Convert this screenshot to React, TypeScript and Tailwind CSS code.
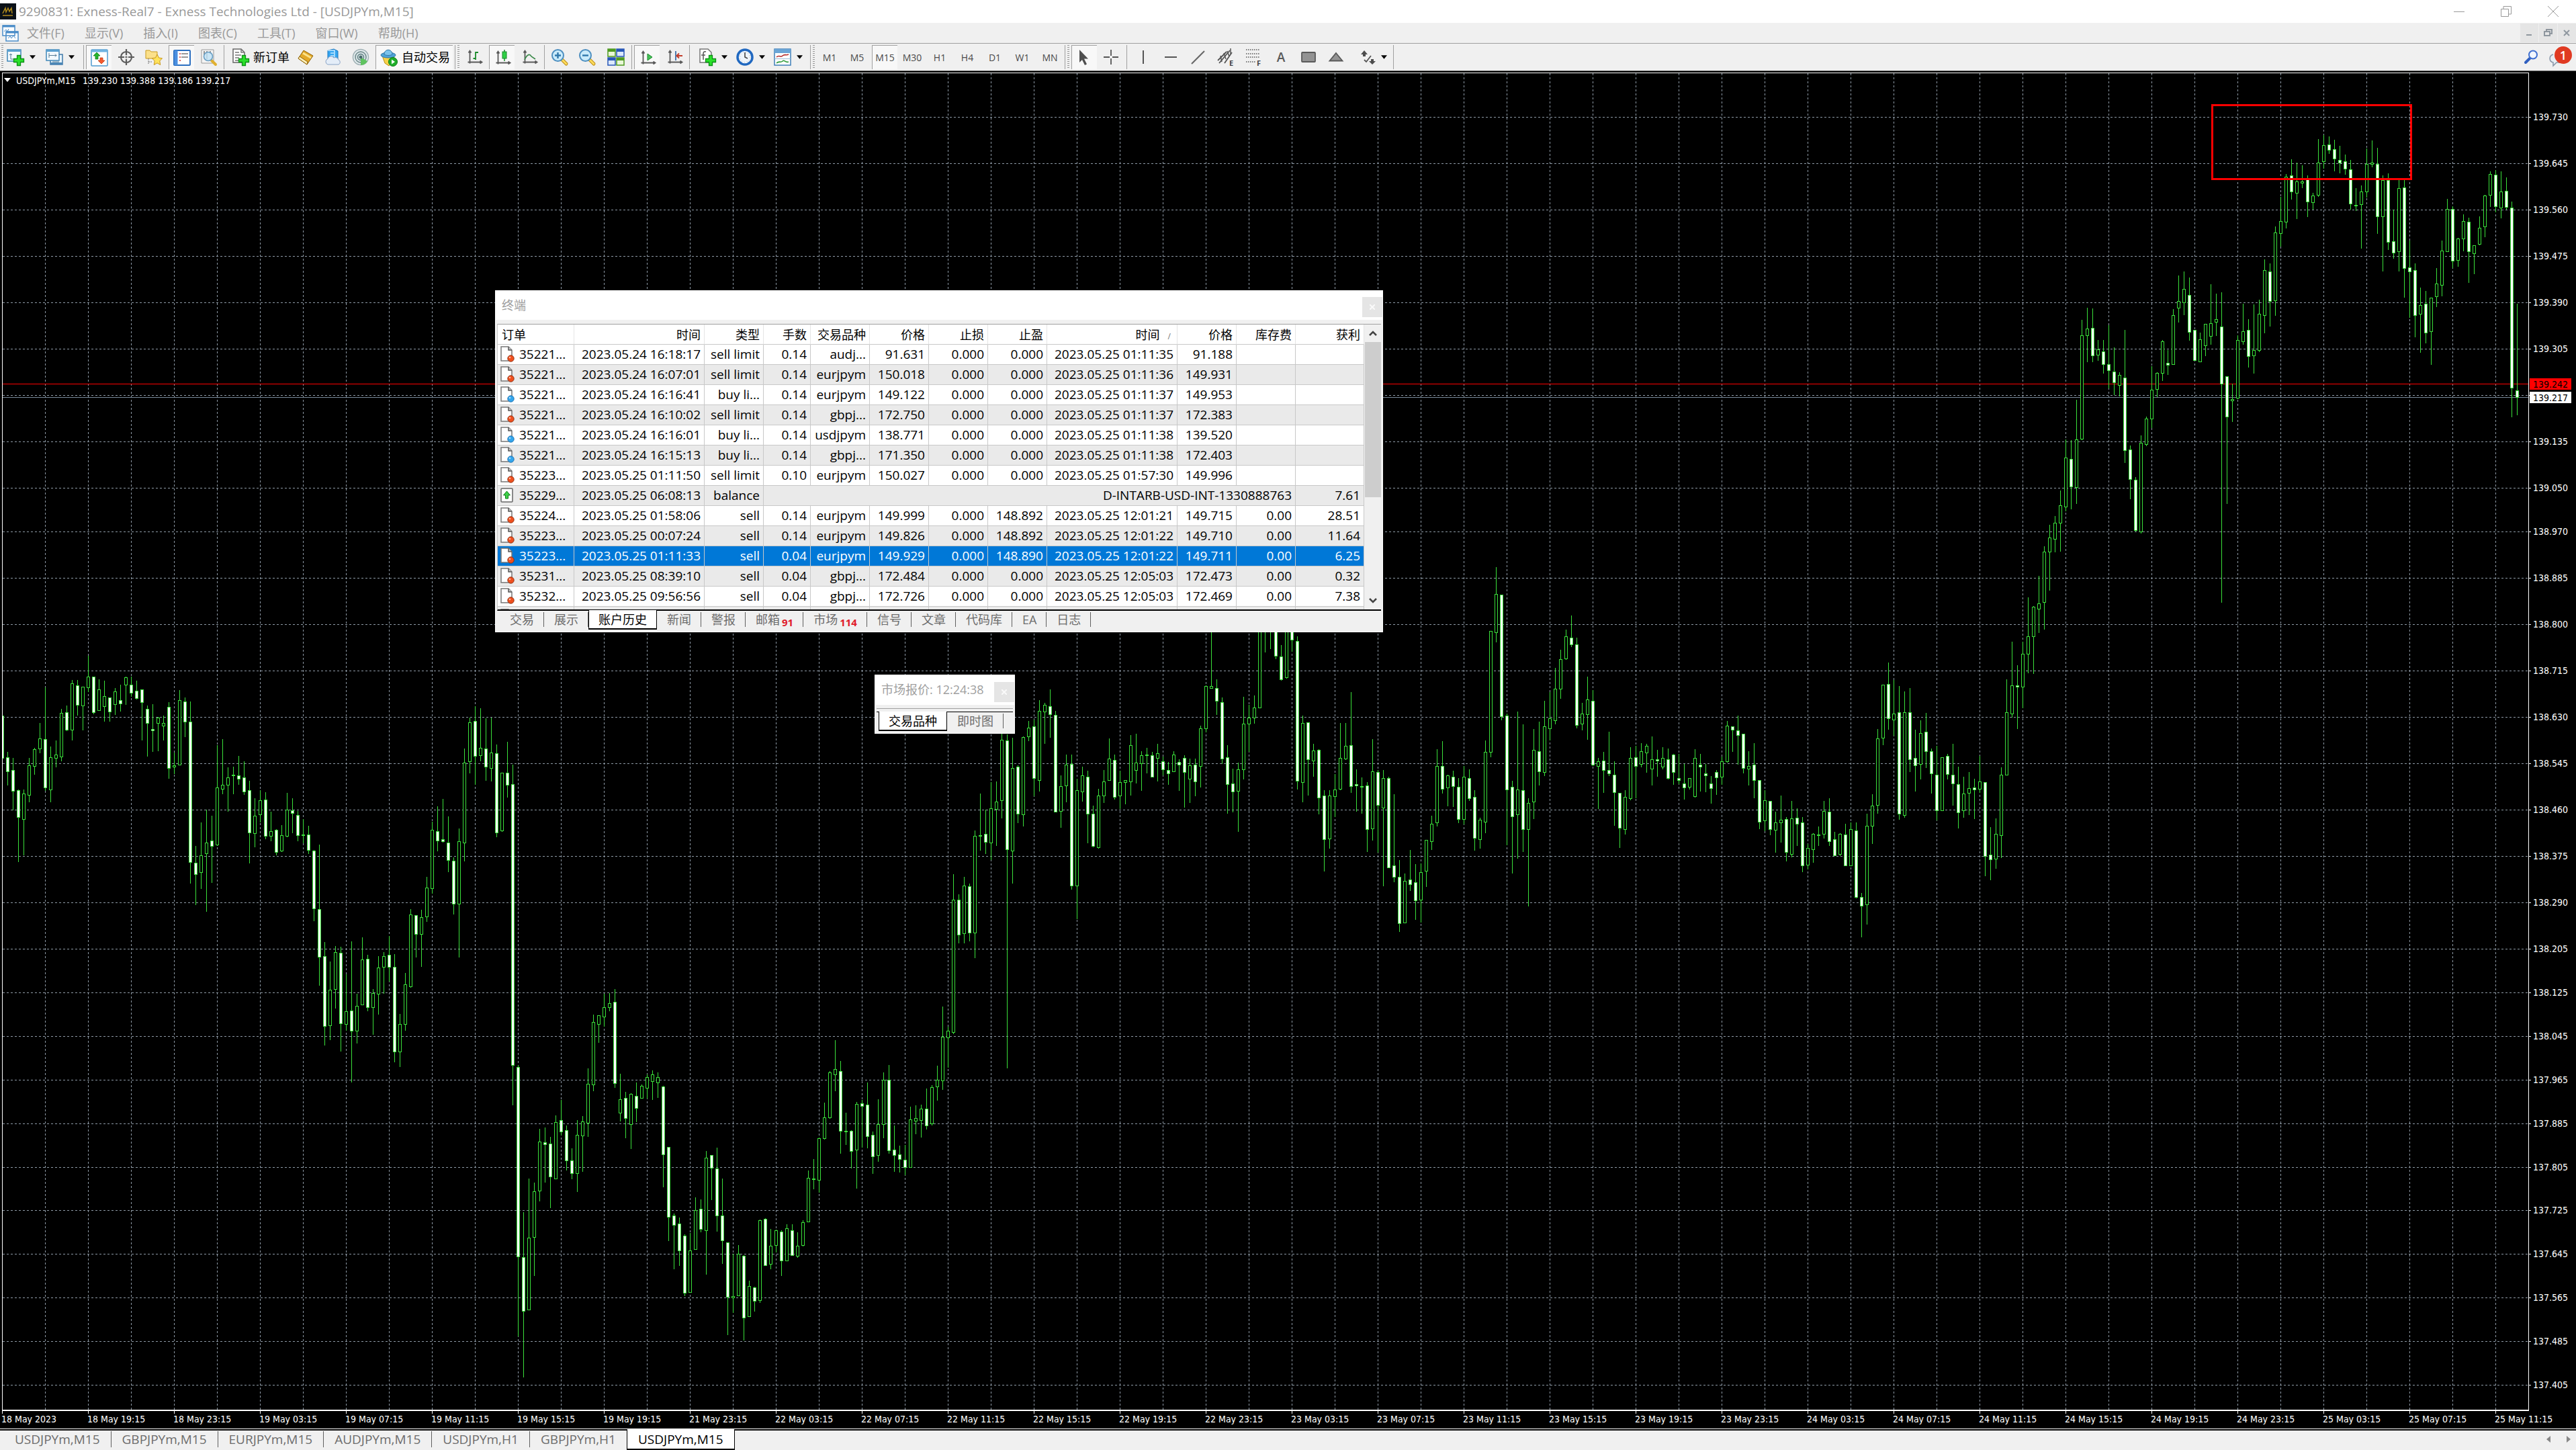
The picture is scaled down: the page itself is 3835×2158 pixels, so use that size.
import type { ReactNode } from "react";

type Bar = { x: number; high: number; top: number; bottom: number; low: number; down: boolean };

// Each session keeps its own origin and zoom. A bar is "high top bottom low", d marks a falling one.
const sessions = [
  {
    origin: 980,
    zoom: 1.4255,
    bars: `103 121 211 237d,198 209 240 268d,211 237 281 321d,278 279 337 430d,278 286 340 416,211 226 290 303,190 192 228 245,137 169 191 199,62 171 274 279d,187 209 278 304,
174 204 211 229,107 116 208 217,100 114 151 152d,46 53 151 172,46 57 98 120d,60 60 100 151,-5 38 62 70,38 39 114 117d,44 66 110 110,47 80 101 133,
82 82 112 133d,63 70 97 118,56 88 95 111d,39 40 55 97,38 55 73 80d,47 68 84 85d,65 66 92 172d,100 107 137 207d,97 150 153 197d,124 126 137 196,
121 137 142 173,92 103 232 254d,199 226 230 244,67 88 225 225,83 91 134 165d,91 134 432 476d,398 434 458 522d,348 418 453 488,321 390 414 536,334 387 398 475d,
184 274 395 396,171 268 277 287,231 253 268 324,229 246 248 287,207 248 255 267d,218 252 282 288d,259 279 369 433d,296 333 370 399,279 301 331 346,284 300 377 382d,
325 366 377 387,362 364 410 416d,354 375 408 409,285 321 377 378,296 322 328 369d,324 332 375 387d,341 373 375 391d,355 373 406 413d,406 407 530 556d,395 531 633 693d,
602 632 780 820d,643 703 778 808,610 623 701 741,611 625 774 833d,670 749 776 789,600 747 790 898d,711 737 790 815,591 638 734 734,629 637 740 747d,702 710 740 797,
631 656 711 754,623 632 654 710,589 629 654 684d,627 655 834 855d,754 776 834 865,667 692 775 788,532 543 695 697,544 544 584 633d,533 549 585 653,463 486 548 557,
346 364 487 497,314 366 386 408d,298 384 388 389d,335 390 427 452d,422 429 521 542d,361 388 520 633,191 221 390 429,125 136 218 242,101 133 207 267d,105 189 205 216,
127 191 230 258d,125 199 232 260,182 201 369 378d,242 243 365 366,177 242 268 294d,225 266 862 947d,862 866 1268 1437d,1175 1270 1384 1524d,1103 1229 1381 1381,1112 1131 1227 1309,
998 1025 1129 1150,995 1026 1030 1110d,1015 1029 1099 1165d,969 983 1103 1103,937 980 1004 1010d,991 1000 1065 1085d`,
  },
  {
    origin: 1080,
    zoom: 1.6,
    bars: `1006 1035 1065 1079d,939 975 1066 1108,929 943 976 1061,816 853 945 978,688 705 855 868,689 690 710 754,638 671 692 715,637 660 670 679,627 657 851 861d,828 890 922 940,
872 887 934 980d,875 877 949 1006,850 881 910 942d,855 857 887 887,831 836 863 887,820 831 846 889,825 836 850 885,858 859 1021 1098d,1003 1003 1169 1225d,1161 1167 1188 1293d,
1171 1186 1250 1285d,1211 1214 1350 1357d,1208 1250 1348 1348,1123 1153 1247 1247,1128 1151 1198 1205d,1013 1028 1201 1306,1022 1023 1053 1128d,1005 1054 1166 1203d,1079 1166 1225 1280d,1230 1230 1360 1450d,
1258 1359 1361 1396,1237 1258 1356 1356,1261 1262 1410 1462d,1321 1335 1406 1406,1336 1337 1370 1394d,1176 1177 1368 1372,1172 1175 1284 1285d,1199 1238 1281 1293,1200 1201 1236 1252,1202 1204 1274 1308d,
1187 1197 1273 1273,1187 1201 1260 1261d,1207 1238 1263 1266,1177 1182 1237 1238,1059 1077 1180 1181,1032 1078 1079 1103,980 982 1081 1111,897 932 983 984,822 825 933 934,749 818 830 868,
798 822 964 1018d,922 965 966 997,963 964 1012 1053d,896 900 1009 1101,891 899 905 1003d,850 903 977 1004d,966 975 1026 1066d,889 948 1023 1036,826 843 949 981,808 843 1011 1017d,
952 1009 1023 1061d,1000 1020 1032 1062d,998 1033 1051 1068d,907 938 1051 1051,904 935 940 971,903 912 939 979,864 912 952 960d,856 861 947 950,809 843 859 891,669 741 845 865,
716 727 743 812,354 415 730 733,401 415 497 516d,360 380 495 517,376 382 492 512d,249 262 492 552,162 260 262 296,200 257 276 304d,135 196 278 318,133 180 199 284,
10 34 177 219,20 35 295 814d,29 101 298 374,94 98 209 230d,25 27 211 238,-12 5 25 35,-14 2 125 167d,-61 -35 129 155,-54 -50 -33 42,-87 -47 -27 27d,
-35 -25 205 205d,119 144 203 242,69 92 142 181,69 91 380 388d,126 153 381 459,97 119 156 179,107 121 210 278d,190 209 287 288d,151 166 290 291,106 132 167 182,
31 79 130 130,69 81 169 174d,107 134 167 197,129 130 135 186,22 46 132 165,19 88 105 136,61 70 90 153,52 68 71 112,62 70 122 122d,43 66 76 131,
74 84 104 116d,87 105 113 139d,61 69 108 108,80 86 92 153d,71 76 110 194d,79 95 127 182,79 93 132 166d,0 7 96 145,-96 -94 6 15`,
  },
  {
    origin: 820,
    zoom: 2.6133,
    bars: `200 526 532 532,499 532 584 635d,571 589 807 827d,755 803 906 1018d,847 903 935 1015d,824 850 932 1090,567 672 849 886,599 647 671 780,563 610 647 668,200 250 608 608,
200 230 280 392,200 230 290 378,200 250 407 417d,366 411 498 502d,250 300 492 493,250 280 346 390d,332 351 895 925d,639 670 898 975,666 667 809 949d,750 775 815 876,
772 773 958 1022d,930 952 1120 1244d,930 952 1118 1155,868 929 953 1032,669 806 924 929,669 759 807 811,548 754 914 938d,849 908 913 1012d,880 915 916 1018,899 913 1081 1168d,
733 858 1079 1124,852 860 989 1172d,852 884 997 1301,877 884 1230 1231d,946 1224 1267 1287d,1202 1268 1449 1478d,1254 1284 1444 1445,1163 1279 1295 1320d,1219 1289 1358 1432d,1215 1248 1355 1443,
1124 1125 1245 1304,1030 1062 1128 1160,771 837 1057 1070,740 835 924 942d,869 874 919 990,855 879 914 994d,883 916 1042 1057d,837 879 1044 1062,849 884 963 969d,930 957 1115 1163d,
1037 1046 1122 1155,737 782 1052 1094,311 312 782 799,63 166 315 353,170 171 644 656d,633 641 929 1142d,895 918 1033 1252d,625 929 1025 1195,674 931 1083 1168d,962 981 1081 1381,
693 774 976 1040,664 780 856 910d,582 683 861 873,549 650 689 735,455 537 658 672,384 422 535 572,306 333 419 420,250 338 362 371d,337 364 676 686d,591 633 671 695,
489 578 636 733,540 584 832 833d,806 819 835 1001,782 816 851 938d,703 853 864 873d,819 871 937 1067d,941 942 1076 1152d,930 957 1081 1101,762 806 963 966,758 803 835 960d,
748 780 829 839,750 759 783 860,720 811 848 909,774 809 815 876d,762 806 839 846,769 811 884 885d,788 793 861 907d,788 884 892 905d,829 903 919 964d,883 884 916 924,
770 806 955 956,789 832 840 934d,829 866 874 935d,875 903 922 980d,853 861 880 947d,800 819 877 907,661 680 817 820,681 683 696 779d,640 699 715 829d,711 712 844 862d,
780 837 846 909,747 832 892 960d,890 890 1052 1078d,930 970 1047 1087,972 973 1081 1102d,1015 1056 1084 1171,951 1046 1055 1132,1035 1044 1172 1206d,972 1041 1178 1188,1002 1038 1060 1145d,
1036 1056 1222 1247d,1139 1156 1220 1235,1098 1101 1159 1210,1071 1104 1105 1145,972 1012 1099 1115,962 1015 1128 1145d,1092 1122 1183 1184d,1098 1099 1178 1184,1061 1104 1222 1222d,1056 1083 1222 1222,
1056 1088 1346 1348d,1330 1347 1380 1500d,1021 1070 1374 1450,946 991 1068 1137,693 730 987 1019,520 521 726 752,435 518 650 692d,502 633 655 717,526 628 1021 1043d,546 626 1026 1036,
534 628 809 857d,695 806 833 934d,659 707 828 886,629 704 778 841d,768 780 864 942d,759 869 1010 1046d,802 803 1008 1008,790 798 867 886d,750 871 904 989d,839 908 1017 1077d,
878 944 1010 1036,860 923 942 1024,886 920 927 1040d,797 897 925 938,899 900 1186 1262d,1073 1180 1199 1278d,1040 1099 1196 1233,841 871 1105 1192,499 626 869 870,352 523 632 645,
444 523 527 690d,352 401 527 608,180 333 400 473,214 218 331 476,97 203 224 316`,
  },
  {
    origin: 120,
    zoom: 1.5373,
    bars: `1065 1078 1193 1254,1016 1046 1078 1165,996 1012 1048 1078,938 972 1012 1076,821 863 974 984,822 866 928 979d,730 821 930 967,547 582 820 821,520 568 582 642,521 565 629 643d,
594 615 627 639,593 619 648 669d,559 649 663 703d,611 665 691 718d,667 674 696 721,571 679 846 873d,835 844 912 956d,907 913 1028 1030d,812 828 1031 1035,769 774 831 835,
653 707 773 793,667 668 705 723,594 596 668 685,616 646 651 672d,522 536 648 649,446 505 520 552,436 476 507 535,450 491 575 593d,570 571 639 640d,576 592 642 642,
556 557 605 629,466 555 584 603,487 545 552 583,484 562 694 1193d,676 677 768 967d,693 728 732 780,582 594 726 727,511 574 596 603,545 571 631 655d,512 617 628 669,
501 533 616 620,409 434 536 576,418 436 505 561d,334 348 502 537,266 322 349 378,214 220 323 336,180 217 253 271d,188 230 256 315,193 230 234 245,217 226 277 310d,
257 263 279 293,134 187 261 265,125 147 184 200,128 146 159 166d,135 157 178 206d,149 181 187 211d,169 184 202 214d,181 203 282 294d,246 284 285 297,240 254 283 383,
155 190 253 266,137 188 191 197,154 190 311 349d,217 227 310 435,212 227 369 386d,295 368 394 406d,227 246 391 435,227 244 429 495d,366 428 436 541d,418 433 536 586d,
473 513 533 621,481 510 577 599d,496 496 574 649,429 465 494 517,366 389 468 492,271 294 390 390,287 293 412 428d,360 362 411 425,306 322 361 389,314 323 391 461d,
376 376 395 441,311 336 374 375,262 263 334 357,208 213 262 287,205 215 288 300d,208 254 290 314,221 252 289 293d,277 290 703 768d,510 708 724 764d`,
  },
];

const bars: Bar[] = sessions
  .flatMap(({ origin, zoom, bars }) =>
    bars.split(",").map((text) => {
      const [high, top, bottom, low] = text
        .trim()
        .split(" ")
        .map((n) => Math.round(origin + parseInt(n, 10) / zoom));
      return { x: 0, high, top, bottom, low, down: text.endsWith("d") };
    })
  )
  .map((bar, i) => ({ ...bar, x: 3 + i * 8 }));

const prices = [
  139.73, 139.645, 139.56, 139.475, 139.39, 139.305, 139.22, 139.135, 139.05, 138.97, 138.885, 138.8,
  138.715, 138.63, 138.545, 138.46, 138.375, 138.29, 138.205, 138.125, 138.045, 137.965, 137.885,
  137.805, 137.725, 137.645, 137.565, 137.485, 137.405,
];

const times = [
  "18 May 2023", "18 May 19:15", "18 May 23:15",
  "19 May 03:15", "19 May 07:15", "19 May 11:15", "19 May 15:15", "19 May 19:15",
  "21 May 23:15",
  "22 May 03:15", "22 May 07:15", "22 May 11:15", "22 May 15:15", "22 May 19:15", "22 May 23:15",
  "23 May 03:15", "23 May 07:15", "23 May 11:15", "23 May 15:15", "23 May 19:15", "23 May 23:15",
  "24 May 03:15", "24 May 07:15", "24 May 11:15", "24 May 15:15", "24 May 19:15", "24 May 23:15",
  "25 May 03:15", "25 May 07:15", "25 May 11:15",
];

const priceY = (price: number) => Math.round(175 + (139.73 - price) * 811.7) - 1;

function Chart() {
  return (
    <svg
      className="block h-full w-full font-['DejaVu_Sans_Condensed','DejaVu_Sans',sans-serif] text-[14px]"
      viewBox="0 106 3835 2020"
      preserveAspectRatio="none"
    >
      <g shapeRendering="crispEdges" fill="none">
        <g stroke="#8e9aa6" strokeDasharray="3 3">
          {prices.map((p) => (
            <path key={p} d={`M4 ${priceY(p) + 0.5}H3764`} />
          ))}
          {Array.from({ length: 58 }, (_, i) => (
            <path key={i} d={`M${67.5 + i * 64} 109V2098`} />
          ))}
        </g>
        <path d="M3 571.5H3764" stroke="#ff0000" />
        <path d="M3 591.5H3764" stroke="#778899" />
        {bars.map((b) => (
          <g key={b.x} stroke="#3ae03a">
            <path d={`M${b.x + 0.5} ${b.high}V${b.low + 1}`} />
            <rect
              x={b.x - 1.5}
              y={b.top + 0.5}
              width={4}
              height={Math.max(b.bottom - b.top, 1)}
              fill={b.down ? "#ffffff" : "#000000"}
            />
          </g>
        ))}
        <rect x="3293.5" y="156.5" width="296" height="110" stroke="#ff0000" strokeWidth="3" />
        <path d="M0 106H3V2126H0Z" fill="#000" />
        <path d="M3.5 2099V108.5H3764.5V2099" stroke="#fff" />
        <path d="M3 2099H3765" stroke="#fff" strokeWidth="2" />
        {prices.map((p) => (
          <path key={p} d={`M3765 ${priceY(p) + 0.5}H3768`} stroke="#fff" />
        ))}
        {times.map((t, i) => (
          <path key={t} d={`M${3.5 + i * 128} 2100V2104`} stroke="#fff" />
        ))}
      </g>
      <g fill="#fff">
        {prices
          .filter((p) => p !== 139.22)
          .map((p) => (
            <text key={p} x="3771" y={priceY(p) + 5}>
              {p.toFixed(3)}
            </text>
          ))}
        {times.map((t, i) => (
          <text key={t} x={2 + i * 128} y="2117">
            {t}
          </text>
        ))}
      </g>
      <rect x="3766" y="563" width="62" height="17" fill="#ff0000" />
      <text x="3771" y="577">139.242</text>
      <rect x="3766" y="583" width="62" height="17" fill="#fff" />
      <text x="3771" y="597">139.217</text>
      <path d="M6 116H16L11 122Z" fill="#fff" />
      <g fill="#fff">
        <text x="24" y="125">USDJPYm,M15</text>
        <text x="123" y="125">139.230 139.388 139.186 139.217</text>
      </g>
    </svg>
  );
}

function Icon({ children }: { children: ReactNode }) {
  return (
    <svg viewBox="0 0 26 26" className="h-[26px] w-[26px] shrink-0 overflow-visible" fill="none">
      {children}
    </svg>
  );
}

const Plus = () => (
  <path d="M15.5 10.5h5v5h5v5h-5v5h-5v-5h-5v-5h5z" fill="#2be02b" stroke="#0a8f14" strokeWidth="1.3" />
);
const Axes = () => (
  <path d="M6.500 4v18.500M3.500 20.500H24M4.500 6.500l2-3 2 3M21.500 18.500l3 2-3 2" stroke="#5a5a5a" strokeWidth="1.8" />
);
const Lens = ({ minus }: { minus?: boolean }) => (
  <>
    <path d="m16 16 7 7" stroke="#b98a12" strokeWidth="5" strokeLinecap="round" />
    <path d="m16 16 7 7" stroke="#ffdc5c" strokeWidth="3" strokeLinecap="round" />
    <circle cx="10.5" cy="10.5" r="8.5" fill="#c9ebfb" stroke="#4d8fc0" strokeWidth="2" />
    <path d={minus ? "M6 10.500h9" : "M6 10.500h9M10.500 6v9"} stroke="#2f78ac" strokeWidth="2.4" />
  </>
);

const icons = {
  newChart: (
    <Icon>
      <rect x="1" y="2" width="20" height="17" fill="#f3faff" stroke="#3f86b8" strokeWidth="1.5" />
      <path d="M1 3.500h20" stroke="#5aa0d0" strokeWidth="3" />
      <path d="M6 8v8h7M4 10l2-2 2 2" stroke="#557a92" />
      <Plus />
    </Icon>
  ),
  profiles: (
    <Icon>
      <rect x="7" y="9" width="18" height="15" fill="#e8f4fc" stroke="#3f78a8" strokeWidth="1.5" />
      <path d="M7 22.500h18" stroke="#4a86b6" strokeWidth="3" />
      <rect x="1" y="2" width="19" height="16" fill="#f3faff" stroke="#3f86b8" strokeWidth="1.5" />
      <path d="M1 3.500h19" stroke="#5aa0d0" strokeWidth="3" />
      <path d="M5 7v7M5 10.500h11M14 8.500l2 2-2 2M10 20h10" stroke="#557a92" />
    </Icon>
  ),
  market: (
    <Icon>
      <rect x="1" y="1" width="24" height="24" rx="1" fill="#fff" stroke="#4f9bd0" strokeWidth="1.5" />
      <path d="M1 3h24" stroke="#6db3e2" strokeWidth="3" />
      <path d="m9 5 5 5h-3v5H7v-5H4z" fill="#25b52d" stroke="#0c7d16" strokeWidth=".8" />
      <path d="m16 22 5-5h-3v-4h-4v4h-3z" fill="#f6592d" stroke="#c23a10" strokeWidth=".8" />
    </Icon>
  ),
  dataWindow: (
    <Icon>
      <circle cx="13" cy="13" r="8" stroke="#5c5c5c" strokeWidth="2.2" />
      <path d="M13 1v9M13 16v9M1 13h9M16 13h9" stroke="#5c5c5c" strokeWidth="2.2" />
      <path d="M13 11v4M11 13h4" stroke="#5c5c5c" />
    </Icon>
  ),
  navigator: (
    <Icon>
      <path d="M1 3h6l2 2h9v10H1z" fill="#fbe08a" stroke="#c99a1d" />
      <path d="M5 15v9M5 20h6" stroke="#777" strokeDasharray="2 1" />
      <path d="m18 9 2.500 5 5 .8-3.700 4 .9 5.700-4.700-2.700-4.700 2.700.9-5.700-3.700-4 5-.8z" fill="#ffe35c" stroke="#c8961a" />
    </Icon>
  ),
  terminal: (
    <Icon>
      <rect x="1" y="2" width="24" height="22" rx="1" fill="#fff" stroke="#2b6fc0" strokeWidth="2" />
      <path d="M4 2v22" stroke="#4b8fe0" strokeWidth="5" />
      <path d="M9 7h2M9 12h2M9 17h2" stroke="#d02a2a" strokeWidth="1.5" />
      <path d="M12 7h10M12 12h10" stroke="#333" />
    </Icon>
  ),
  tester: (
    <Icon>
      <path d="M2 2h18v20H2z" fill="#f4f4f4" stroke="#999" />
      <path d="M6 4v6M10 4v12M15 4v4" stroke="#777" strokeWidth="1.5" />
      <path d="m17 18 6 6" stroke="#e0b030" strokeWidth="4" strokeLinecap="round" />
      <circle cx="12" cy="12" r="6.5" fill="#bfe2f6" fillOpacity=".8" stroke="#6a9fc4" strokeWidth="1.6" />
    </Icon>
  ),
  order: (
    <Icon>
      <path d="M2 1h12l5 5v15H2z" fill="#fff" stroke="#666" strokeWidth="1.5" />
      <path d="M14 1v5h5M5 6h6M5 10h9M5 14h6M5 18h5" stroke="#777" strokeWidth="1.5" />
      <Plus />
    </Icon>
  ),
  editor: (
    <Icon>
      <path d="m2 15 8-12 14 8-9 13z" fill="#e3a92a" stroke="#8f6206" strokeLinejoin="round" />
      <path d="m2 15 13 9 1-4L4 12z" fill="#fff0b8" stroke="#8f6206" strokeLinejoin="round" />
      <path d="m9 7 12 7" stroke="#fbe38c" strokeWidth="3" />
    </Icon>
  ),
  cloud: (
    <Icon>
      <path d="m5 3 9-2 6 3v12H5z" fill="#35a5f0" stroke="#1774bd" />
      <path d="M5 3h10v13M9 7h5M9 11h5" stroke="#c8eaff" strokeWidth="1.5" />
      <path d="M5 24a4.500 4.500 0 0 1 0-8.500 5 5 0 0 1 9-1.500 5 5 0 0 1 7 3 3.800 3.800 0 0 1 0 7z" fill="#e4edf8" stroke="#8aa3c6" />
    </Icon>
  ),
  signal: (
    <Icon>
      <circle cx="13" cy="13" r="11.5" fill="#e6eef0" stroke="#9fb0b4" strokeWidth="1.5" />
      <circle cx="13" cy="13" r="8" stroke="#7b9496" strokeWidth="1.8" />
      <circle cx="13" cy="13" r="4.5" stroke="#6b8a8c" strokeWidth="1.8" />
      <path d="M13 13v12a12 12 0 0 0 10-6z" fill="#5fc35f" />
      <circle cx="13" cy="13" r="2.5" fill="#4a6a6c" />
    </Icon>
  ),
  auto: (
    <Icon>
      <path d="M3 10h18l-3 10-5 5-6-4z" fill="#f7d24a" stroke="#b98d16" />
      <ellipse cx="12" cy="9" rx="11" ry="4" fill="#4fa3d8" stroke="#2d75a5" />
      <path d="M6 8c0-9 12-9 12 0-3 2-9 2-12 0z" fill="#7cc3ec" stroke="#2d75a5" />
      <circle cx="19" cy="19" r="6.5" fill="#1fae2a" stroke="#0c7d16" />
      <path d="m17 15.500 5 3.500-5 3.500z" fill="#fff" />
    </Icon>
  ),
  barChart: (
    <Icon>
      <Axes />
      <path d="M15 5v12M15 6h4M11.500 15H15" stroke="#1b8a2b" strokeWidth="1.8" />
    </Icon>
  ),
  candles: (
    <Icon>
      <Axes />
      <path d="M16 1v17" stroke="#1b8a2b" strokeWidth="1.5" />
      <rect x="13" y="4" width="6" height="10" fill="#2fd046" stroke="#1b8a2b" />
    </Icon>
  ),
  lineChart: (
    <Icon>
      <Axes />
      <path d="M6 17c4-9 8-9 10-5l6 4" stroke="#3c8a4a" strokeWidth="1.6" />
    </Icon>
  ),
  zoomIn: <Icon><Lens /></Icon>,
  zoomOut: <Icon><Lens minus /></Icon>,
  tile: (
    <Icon>
      <path d="M1 1h11v11H1zM14 14h11v11H14z" fill="#e9f7d8" stroke="#4f9b22" strokeWidth="1.5" />
      <path d="M14 1h11v11H14zM1 14h11v11H1z" fill="#dbe8fb" stroke="#2857b8" strokeWidth="1.5" />
      <path d="M1 3h11M14 16h11" stroke="#4f9b22" strokeWidth="4" />
      <path d="M14 3h11M1 16h11" stroke="#2857b8" strokeWidth="4" />
    </Icon>
  ),
  autoScroll: (
    <Icon>
      <Axes />
      <path d="m13 7 7 5-7 5z" fill="#45c258" stroke="#1b8a2b" />
    </Icon>
  ),
  shift: (
    <Icon>
      <Axes />
      <path d="M15 4v14" stroke="#3a6ea8" strokeWidth="1.8" />
      <path d="M25 11h-8M20 7.500 16.500 11l3.500 3.500" stroke="#c23a28" strokeWidth="2" />
    </Icon>
  ),
  indicators: (
    <Icon>
      <path d="M2 1h12l5 5v15H2z" fill="#fff" stroke="#777" strokeWidth="1.5" />
      <path d="M11 5c-3-1-4 1-4 3v9M4 10h6" stroke="#555" strokeWidth="1.5" />
      <Plus />
    </Icon>
  ),
  clock: (
    <Icon>
      <circle cx="13" cy="13" r="11" fill="#eef5fc" stroke="#2068c0" strokeWidth="3.5" />
      <path d="M13 6v7l4 2" stroke="#444" strokeWidth="1.6" />
      <circle cx="13" cy="13" r="7.5" stroke="#aaa" strokeDasharray="1 3" />
    </Icon>
  ),
  template: (
    <Icon>
      <rect x="1" y="1" width="24" height="24" fill="#fff" stroke="#3f7fb8" strokeWidth="1.5" />
      <path d="M1 4h24" stroke="#6aa5d6" strokeWidth="6" />
      <path d="M4 13c4-4 6 1 9-2s5 0 9-2" stroke="#b32b2b" strokeWidth="1.6" />
      <path d="M1 15.500h24" stroke="#9bbcd6" />
      <path d="M4 22c4-4 6 0 9-3s4 3 9 1" stroke="#2e9a3a" strokeWidth="1.6" />
    </Icon>
  ),
  cursor: (
    <Icon>
      <path d="M5 1v19l4-4 4 8 3-1.500-4-8h6z" fill="#4f4f4f" />
    </Icon>
  ),
  cross: (
    <Icon>
      <path d="M12 2v9M12 15v9M1 13h9M14 13h9" stroke="#555" strokeWidth="1.8" />
    </Icon>
  ),
  vLine: <Icon><path d="M13 3v20" stroke="#555" strokeWidth="2" /></Icon>,
  hLine: <Icon><path d="M4 13h18" stroke="#555" strokeWidth="2" /></Icon>,
  trend: <Icon><path d="M3 23 22 4" stroke="#666" strokeWidth="2" /></Icon>,
  channel: (
    <Icon>
      <path d="m1 18 13-13M3 22 19 3M11 22 22 6" stroke="#555" strokeWidth="1.8" />
      <path d="m5 11 2 9M10 7l3 9M15 4l3 8M20 0v8" stroke="#555" strokeWidth="1.5" />
      <text x="18" y="26" className="text-[11px] font-bold" fill="#444">E</text>
    </Icon>
  ),
  fibo: (
    <Icon>
      <path d="M2 2h21M2 8h21M2 13h21M2 20h14" stroke="#555" strokeWidth="1.6" strokeDasharray="1.5 1.5" />
      <text x="18" y="26" className="text-[11px] font-bold" fill="#444">F</text>
    </Icon>
  ),
  box: <Icon><rect x="3" y="6" width="20" height="14" rx="1" fill="#939393" stroke="#5a5a5a" strokeWidth="1.8" /></Icon>,
  triangle: <Icon><path d="m13 7 9.500 11.500h-19z" fill="#939393" stroke="#5a5a5a" strokeWidth="1.8" /></Icon>,
  arrows: (
    <Icon>
      <path d="m7 3 5 6H9v3H5V9H2zM19 24l-5-5h3v-3h4v3h3z" fill="#4d4d4d" />
      <path d="m7 17 3 3 7-9" stroke="#555" strokeWidth="1.8" />
    </Icon>
  ),
};

type IconName = keyof typeof icons;

const Caret = () => (
  <svg viewBox="0 0 10 6" className="h-1.5 w-[9px]">
    <path d="M0 0h10L5 6z" fill="#000" />
  </svg>
);

const Divider = ({ className = "" }: { className?: string }) => (
  <span className={`h-9 w-px shrink-0 bg-[#a0a0a0] ${className}`} />
);

const Grip = () => (
  <span className="h-9 w-[3px] shrink-0 bg-[repeating-linear-gradient(#9a9a9a_0_1px,#f0f0f0_1px_3px)]" />
);

const pressed = "border-t border-l border-[#a0a0a0] bg-[#f8f8f8]";

function Tool({ name, on, wide }: { name: IconName; on?: boolean; wide?: boolean }) {
  return (
    <button
      aria-label={name}
      className={`flex h-9 shrink-0 items-center justify-center ${wide ? "w-[41px]" : "w-[38px]"} ${on ? pressed : ""}`}
    >
      {icons[name]}
    </button>
  );
}

function DropTool({ name, width }: { name: IconName; width: string }) {
  return (
    <button aria-label={name} className={`flex h-9 shrink-0 items-center gap-2 pl-0.5 ${width}`}>
      {icons[name]}
      <Caret />
    </button>
  );
}

function Toolbar() {
  return (
    <div className="flex h-[41px] items-center gap-[3px] border-b border-[#606060] bg-[#f0f0f0] pr-1.5 pl-0.5 text-[18px]">
      <Grip />
      <DropTool name="newChart" width="w-[55px]" />
      <DropTool name="profiles" width="w-[55px]" />
      <Divider />
      <Tool name="market" on />
      <Tool name="dataWindow" />
      <Tool name="navigator" />
      <Tool name="terminal" on />
      <Tool name="tester" />
      <Divider />
      <button className="flex h-9 w-24 shrink-0 items-center gap-1.5 pl-2 whitespace-nowrap">
        {icons.order}新订单
      </button>
      <Tool name="editor" />
      <Tool name="cloud" />
      <Tool name="signal" />
      <button className={`flex h-9 w-[115px] shrink-0 items-center gap-1.5 pl-1.5 whitespace-nowrap ${pressed}`}>
        {icons.auto}自动交易
      </button>
      <Divider />
      <Grip />
      <Tool name="barChart" />
      <Tool name="candles" on />
      <Tool name="lineChart" />
      <Divider />
      <Tool name="zoomIn" />
      <Tool name="zoomOut" />
      <Tool name="tile" wide />
      <Divider />
      <Tool name="autoScroll" on />
      <Tool name="shift" />
      <Divider className="mr-2" />
      <DropTool name="indicators" width="w-[53px]" />
      <DropTool name="clock" width="w-[53px]" />
      <DropTool name="template" width="w-[53px]" />
      <Divider />
      <Grip />
      {["M1", "M5", "M15", "M30", "H1", "H4", "D1", "W1", "MN"].map((t) => (
        <button
          key={t}
          className={`h-9 w-[38px] shrink-0 text-center text-[14px] text-[#4a4a4a] ${t === "M15" ? pressed : ""}`}
        >
          {t}
        </button>
      ))}
      <Divider />
      <Grip />
      <Tool name="cursor" on />
      <Tool name="cross" />
      <Divider className="mr-0.5" />
      <Tool name="vLine" />
      <Tool name="hLine" />
      <Tool name="trend" />
      <Tool name="channel" />
      <Tool name="fibo" />
      <button className="h-9 w-[38px] shrink-0 text-[19px] font-semibold text-[#5a5a5a]">A</button>
      <Tool name="box" />
      <Tool name="triangle" />
      <button aria-label="arrows" className="flex h-9 w-[54px] shrink-0 items-center justify-end gap-1.5">
        {icons.arrows}
        <Caret />
      </button>
      <Divider className="ml-1.5" />
      <div className="ml-auto flex items-center gap-3">
        <button aria-label="search">
          <svg viewBox="0 0 22 22" className="h-[22px] w-[22px]" fill="none">
            <path d="m3 19 6-6" stroke="#2f5fc0" strokeWidth="4" strokeLinecap="round" />
            <circle cx="14" cy="7.5" r="6" fill="#f2f7ff" stroke="#3f6fd0" strokeWidth="2" />
          </svg>
        </button>
        <button aria-label="messages" className="relative h-9 w-[38px]">
          <svg viewBox="0 0 38 36" className="h-full w-full" fill="none">
            <path d="M10 14c-7 2-6 11 0 12v5l5-5h6c4-1 5-4 5-6" fill="#e8eef4" stroke="#8796a8" strokeWidth="1.5" />
          </svg>
          <span className="absolute top-0.5 right-0 flex h-[26px] w-[26px] items-center justify-center rounded-full bg-[#e03a22] text-[18px] font-semibold text-white">
            1
          </span>
        </button>
      </div>
    </div>
  );
}

function TitleBar() {
  return (
    <div className="flex h-[34px] items-center bg-white text-[19px] text-[#999999]">
      <svg viewBox="0 0 24 24" className="h-6 w-6">
        <path d="M0 0h24v24H0z" fill="#0b1118" />
        <path d="m4 15 4-8 1 6 3-6 2 5 3-5 1 8" stroke="#b08a1c" strokeWidth="1.5" fill="none" />
        <path d="M4 18h15" stroke="#8a6c1a" strokeWidth="2" />
      </svg>
      <span className="pl-1">9290831: Exness-Real7 - Exness Technologies Ltd - [USDJPYm,M15]</span>
      <div className="ml-auto flex gap-[54px] pr-[26px]">
        <button aria-label="minimize">
          <svg viewBox="0 0 16 16" className="h-4 w-4"><path d="M0 8.500h16" stroke="#999" /></svg>
        </button>
        <button aria-label="restore">
          <svg viewBox="0 0 16 16" className="h-4 w-4" fill="none" stroke="#999">
            <path d="M.5 4.500h11v11H.5zM4 4V.5h11.500V12H12" />
          </svg>
        </button>
        <button aria-label="close">
          <svg viewBox="0 0 16 16" className="h-4 w-4"><path d="m0 0 16 16M16 0 0 16" stroke="#999" /></svg>
        </button>
      </div>
    </div>
  );
}

function MenuBar() {
  return (
    <div className="flex h-[31px] items-center border-b border-[#a0a0a0] bg-[#f0f0f0] text-[18px] text-[#999999]">
      <svg viewBox="0 0 26 26" className="ml-0.5 h-[26px] w-[26px]" fill="#fff" stroke="#4a8cc8" strokeWidth="1.5">
        <path d="M2 2h18v15H2zM7 11h18v14H7z" />
        <path d="M2 3h18M7 12h18" strokeWidth="3" />
        <path d="m4 11 3-3 2 3 2-4M10 21l3-3 2 3 3-4 3 4" fill="none" strokeWidth="1" />
      </svg>
      <nav className="flex gap-[30px] pl-3">
        {["文件(F)", "显示(V)", "插入(I)", "图表(C)", "工具(T)", "窗口(W)", "帮助(H)"].map((m) => (
          <button key={m}>{m}</button>
        ))}
      </nav>
      <div className="ml-auto flex gap-px">
        {["M9 17h8", "M8 12h8v6H8zM11 12V9h8v6h-3", "m9 10 8 8M17 10l-8 8"].map((d) => (
          <button key={d} aria-label="window" className="bg-[#e5e5e5]">
            <svg viewBox="0 0 27 28" className="h-7 w-[27px]" fill="none">
              <path d={d} stroke="#8f979f" strokeWidth="2" />
            </svg>
          </button>
        ))}
      </div>
    </div>
  );
}

const widths = [
  "w-[114px]", "w-[194px]", "w-[88px]", "w-[70px]", "w-[88px]", "w-[88px]",
  "w-[88px]", "w-[88px]", "w-[194px]", "w-[88px]", "w-[88px]", "w-[102px]",
];

const columns = ["订单", "时间", "类型", "手数", "交易品种", "价格", "止损", "止盈", "时间", "价格", "库存费", "获利"];

const rows = [
  ["35221...", "2023.05.24 16:18:17", "sell limit", "0.14", "audj...", "91.631", "0.000", "0.000", "2023.05.25 01:11:35", "91.188", "", ""],
  ["35221...", "2023.05.24 16:07:01", "sell limit", "0.14", "eurjpym", "150.018", "0.000", "0.000", "2023.05.25 01:11:36", "149.931", "", ""],
  ["35221...", "2023.05.24 16:16:41", "buy li...", "0.14", "eurjpym", "149.122", "0.000", "0.000", "2023.05.25 01:11:37", "149.953", "", ""],
  ["35221...", "2023.05.24 16:10:02", "sell limit", "0.14", "gbpj...", "172.750", "0.000", "0.000", "2023.05.25 01:11:37", "172.383", "", ""],
  ["35221...", "2023.05.24 16:16:01", "buy li...", "0.14", "usdjpym", "138.771", "0.000", "0.000", "2023.05.25 01:11:38", "139.520", "", ""],
  ["35221...", "2023.05.24 16:15:13", "buy li...", "0.14", "gbpj...", "171.350", "0.000", "0.000", "2023.05.25 01:11:38", "172.403", "", ""],
  ["35223...", "2023.05.25 01:11:50", "sell limit", "0.10", "eurjpym", "150.027", "0.000", "0.000", "2023.05.25 01:57:30", "149.996", "", ""],
  ["35229...", "2023.05.25 06:08:13", "balance", "D-INTARB-USD-INT-1330888763", "7.61"],
  ["35224...", "2023.05.25 01:58:06", "sell", "0.14", "eurjpym", "149.999", "0.000", "148.892", "2023.05.25 12:01:21", "149.715", "0.00", "28.51"],
  ["35223...", "2023.05.25 00:07:24", "sell", "0.14", "eurjpym", "149.826", "0.000", "148.892", "2023.05.25 12:01:22", "149.710", "0.00", "11.64"],
  ["35223...", "2023.05.25 01:11:33", "sell", "0.04", "eurjpym", "149.929", "0.000", "148.890", "2023.05.25 12:01:22", "149.711", "0.00", "6.25"],
  ["35231...", "2023.05.25 08:39:10", "sell", "0.04", "gbpj...", "172.484", "0.000", "0.000", "2023.05.25 12:05:03", "172.473", "0.00", "0.32"],
  ["35232...", "2023.05.25 09:56:56", "sell", "0.04", "gbpj...", "172.726", "0.000", "0.000", "2023.05.25 12:05:03", "172.469", "0.00", "7.38"],
];

function RowIcon({ type }: { type: string }) {
  if (type === "balance")
    return (
      <svg viewBox="0 0 22 24" className="h-6 w-[22px]" fill="none">
        <rect x="1" y="2" width="17" height="20" rx="1" fill="#fff" stroke="#666" strokeWidth="1.5" />
        <path d="m9.500 6 5 6h-3v5h-4v-5h-3z" fill="#3fd04a" stroke="#0c7d16" />
      </svg>
    );
  const buy = type.startsWith("buy");
  return (
    <svg viewBox="0 0 22 24" className="h-6 w-[22px]" fill="none">
      <path d="M1 1h11l5 5v16H1z" fill="#fff" stroke="#777" strokeWidth="1.5" />
      <path d="M12 1v5h5" fill="#ccc" stroke="#555" strokeWidth="1.5" />
      <circle cx="15.5" cy="18.5" r="4.7" fill={buy ? "#33a6ec" : "#f0501e"} stroke={buy ? "#1a6fb0" : "#8f2f10"} />
      <circle cx="14" cy="17" r="1.3" fill="#fff" fillOpacity=".6" />
    </svg>
  );
}

function CloseButton() {
  return (
    <button aria-label="close" className="mt-1.5 flex h-[30px] w-[30px] items-center justify-center bg-[#e5e5e5]">
      <svg viewBox="0 0 8 8" className="h-2 w-2">
        <path d="m0 0 8 8M8 0 0 8" stroke="#fafafa" strokeWidth="2" />
      </svg>
    </button>
  );
}

function HistoryTable() {
  return (
    <table className="w-[1290px] table-fixed border-separate border-spacing-0 bg-white text-right text-[19px] leading-[28px] text-black">
      <thead>
        <tr className="h-[30px] text-[18px]">
          {columns.map((c, i) => (
            <th
              key={i}
              className={`border-r border-b border-r-[#e5e5e5] border-b-[#c8c8c8] p-0 pr-[5px] font-normal whitespace-nowrap ${widths[i]} ${i === 0 ? "pl-1.5 text-left" : ""}`}
            >
              {c}
              {i === 8 && <span className="pr-1 pl-3 text-[12px] leading-none text-[#777]">/</span>}
            </th>
          ))}
        </tr>
      </thead>
      <tbody>
        {rows.map((row, r) => {
          const selected = r === 10;
          const shade = selected ? "bg-[#0078d7] text-white" : r % 2 ? "bg-[#eaeaea]" : "";
          return (
            <tr key={r} className={`h-[30px] ${shade}`}>
              {row.map((cell, i) => (
                <td
                  key={i}
                  colSpan={row.length === 5 && i === 3 ? 8 : 1}
                  className="border-r border-b border-[#c8c8c8] p-0 pr-[5px] pb-px whitespace-nowrap"
                >
                  {i === 0 ? (
                    <span className="flex h-[28px] items-center gap-1.5 pl-1">
                      <RowIcon type={row[2]} />
                      {cell}
                    </span>
                  ) : (
                    cell
                  )}
                </td>
              ))}
            </tr>
          );
        })}
        <tr className="h-[30px] bg-[#eaeaea]">
          {columns.map((_, i) => (
            <td key={i} className="border-r border-[#c8c8c8] p-0">
              {i === 0 && <span className="flex pl-1"><RowIcon type="sell" /></span>}
            </td>
          ))}
        </tr>
      </tbody>
    </table>
  );
}

const panelTabs: [string, string?][] = [
  ["交易"], ["展示"], ["账户历史"], ["新闻"], ["警报"], ["邮箱", "91"], ["市场", "114"],
  ["信号"], ["文章"], ["代码库"], ["EA"], ["日志"],
];

function PanelTab({ label, count, active }: { label: string; count?: string; active?: boolean }) {
  if (active)
    return (
      <button className="-mt-px h-[29px] border-x border-b-2 border-black bg-white px-3.5 text-black">{label}</button>
    );
  return (
    <button className="flex h-[26px] items-center">
      <span className="pr-3.5 pl-[15px]">
        {label}
        {count && (
          <sub className="bottom-[-3px] ml-[3px] text-[15px] font-bold text-[#e01b2b]">{count}</sub>
        )}
      </span>
      <span className="h-[22px] w-px bg-[#606060]" />
    </button>
  );
}

function Terminal() {
  return (
    <section className="absolute top-[326px] left-[737px] flex w-[1322px] flex-col border-x border-b border-white bg-[#f0f0f0]">
      <header className="flex h-[44px] items-center justify-between bg-white pl-[9px] text-[18px] text-[#a0a0a0]">
        <span>终端</span>
        <CloseButton />
      </header>
      <div className="mx-0.5 mt-1.5 flex h-[427px] overflow-hidden border-t border-b-2 border-l border-t-[#a0a0a0] border-b-black border-l-[#c8c8c8]">
        <HistoryTable />
        <div className="flex flex-1 flex-col items-center bg-[#f0f0f0]">
          <button aria-label="up" className="flex h-[26px] w-full shrink-0 items-center justify-center">
            <svg viewBox="0 0 12 8" className="h-2 w-3"><path d="m1 7 5-5 5 5" stroke="#444" strokeWidth="2.5" fill="none" /></svg>
          </button>
          <span className="h-[231px] w-6 bg-[#cdcdcd]" />
          <button aria-label="down" className="mt-auto flex h-[26px] w-full shrink-0 items-center justify-center">
            <svg viewBox="0 0 12 8" className="h-2 w-3"><path d="m1 1 5 5 5-5" stroke="#444" strokeWidth="2.5" fill="none" /></svg>
          </button>
        </div>
      </div>
      <div className="flex h-[31px] items-start pl-1.5 text-[18px] leading-[26px] text-[#6d6d6d]">
        {panelTabs.map(([label, count]) => (
          <PanelTab key={label} label={label} count={count} active={label === "账户历史"} />
        ))}
      </div>
    </section>
  );
}

function MarketWatch() {
  return (
    <section className="absolute top-[898px] left-[1302px] flex w-[209px] flex-col border-x border-b border-white bg-[#f0f0f0]">
      <header className="flex h-[45px] items-center justify-between bg-white pl-[9px] text-[18px] whitespace-nowrap text-[#a0a0a0]">
        <span>市场报价: 12:24:38</span>
        <CloseButton />
      </header>
      <div className="mx-0.5 mt-[5px] border-t border-[#a0a0a0] pt-1">
        <div className="flex h-8 items-start border-t border-black pl-[3px] text-[18px] leading-[26px] text-[#6d6d6d]">
          <PanelTab label="交易品种" active />
          <PanelTab label="即时图" />
        </div>
      </div>
    </section>
  );
}

const chartTabs = [
  "USDJPYm,M15", "GBPJPYm,M15", "EURJPYm,M15", "AUDJPYm,M15", "USDJPYm,H1", "GBPJPYm,H1", "USDJPYm,M15",
];

function ChartTabs() {
  return (
    <div className="flex h-8 shrink-0 items-start border-t border-white bg-[#f0f0f0] text-[19px] leading-[26px] text-[#6d6d6d]">
      <div className="flex h-[31px] flex-1 items-start border-t-2 border-black pl-1.5">
        {chartTabs.map((tab, i) =>
          i === 6 ? (
            <button key={i} className="-mt-0.5 h-[31px] border-x border-b-2 border-black bg-white px-4 text-black">
              {tab}
            </button>
          ) : (
            <button key={i} className="flex items-center">
              <span className="px-4">{tab}</span>
              {i < 5 && <span className="h-6 w-px bg-[#606060]" />}
            </button>
          )
        )}
        <div className="ml-auto flex h-[26px] items-center gap-6 pr-2">
          <button aria-label="previous">
            <svg viewBox="0 0 6 10" className="h-2.5 w-1.5"><path d="M6 0v10L0 5z" fill="#888" /></svg>
          </button>
          <button aria-label="next">
            <svg viewBox="0 0 6 10" className="h-2.5 w-1.5"><path d="M0 0v10l6-5z" fill="#888" /></svg>
          </button>
        </div>
      </div>
    </div>
  );
}

function App() {
  return (
    <div className="flex h-screen w-full flex-col overflow-hidden bg-black font-['Open_Sans','Noto_Sans_CJK_SC',sans-serif]">
      <TitleBar />
      <MenuBar />
      <Toolbar />
      <main className="relative min-h-0 flex-1">
        <Chart />
        <Terminal />
        <MarketWatch />
      </main>
      <ChartTabs />
    </div>
  );
}

export default App;
